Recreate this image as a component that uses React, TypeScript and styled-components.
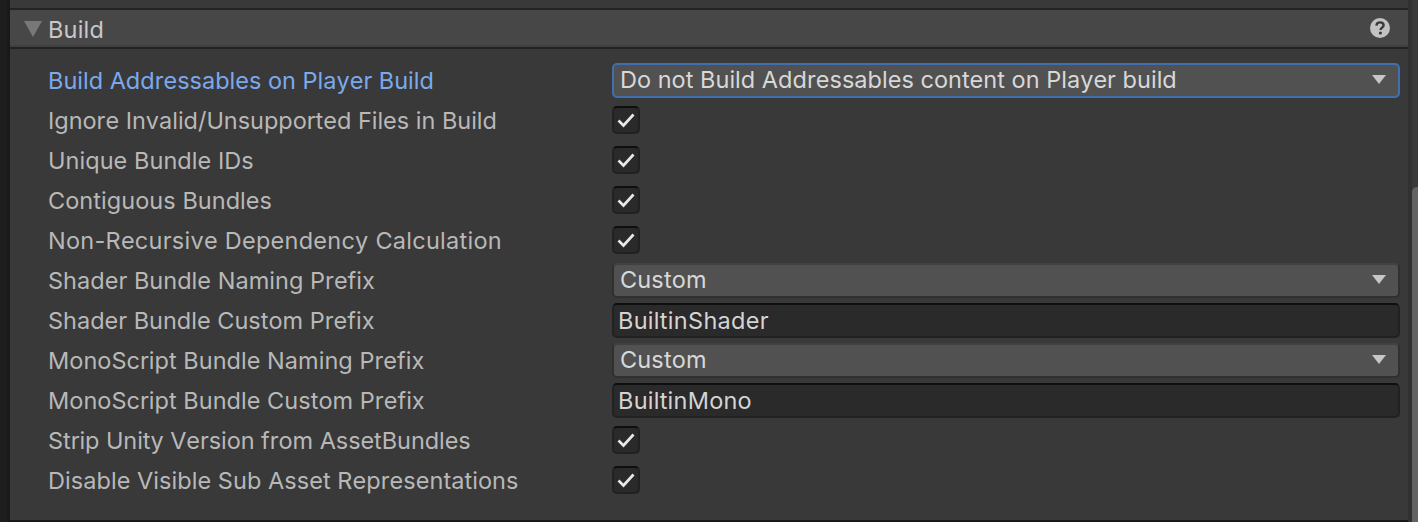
import React from "react";
import styled, { createGlobalStyle } from "styled-components";

const Global = createGlobalStyle`
  html, body { margin: 0; padding: 0; background: #383838; }
  body { font-family: Inter, "Liberation Sans", sans-serif; font-kerning: none; }
  #root { width: 1418px; height: 522px; overflow: hidden; }
`;

const Window = styled.div`
  display: flex;
  width: 1418px;
  height: 522px;
  background: #191919;
`;
const Gutter = styled.div`
  width: 10px;
  flex: none;
  background: linear-gradient(to right, #1e1e1e 70%, #191919 70%);
`;
const Panel = styled.div`
  width: 1398px;
  flex: none;
  display: flex;
  flex-direction: column;
  height: 520px;
  background: #393939;
  padding-top: 8px;
  box-sizing: border-box;
`;
const Track = styled.div`
  width: 10px;
  flex: none;
  height: 522px;
  background: #393939;
  padding-top: 187px;
  box-sizing: border-box;
  display: flex;
  border-left: 4px solid #313131;
`;
const Thumb = styled.div`
  flex: 1;
  background: #636363;
  border-radius: 5px 0 0 0;
`;
const Header = styled.div`
  height: 41px;
  box-sizing: border-box;
  display: flex;
  align-items: center;
  background: #474747;
  border-top: 2px solid #232323;
  border-bottom: 2px solid #232323;
  box-shadow: inset 0 -2px 0 #404040;
  padding: 0 18px 0 14px;
  color: #c8c8c8;
  font-size: 23.5px;
`;
const HeaderTitle = styled.span`
  flex: 1;
  margin-left: 6px;
  letter-spacing: 0.2px;
  position: relative;
  top: 1px;
`;
const HelpIcon = styled.svg`
  flex: none;
  margin-bottom: 1px;
`;
const Rows = styled.div`
  display: flex;
  flex-direction: column;
  padding-top: 11px;
`;
const Row = styled.div`
  display: flex;
  align-items: center;
  height: 40px;
  padding-left: 38px;
`;
const Label = styled.div<{ $active?: boolean; $track?: number }>`
  width: 564px;
  flex: none;
  font-size: 23.5px;
  letter-spacing: ${(p) => p.$track ?? 0}px;
  color: ${(p) => (p.$active ? "#7ba9ec" : "#b8b8b8")};
  white-space: nowrap;
`;
const Dropdown = styled.div<{ $focused?: boolean; $track?: number }>`
  width: 788px;
  height: 35px;
  box-sizing: border-box;
  display: flex;
  align-items: center;
  justify-content: space-between;
  padding: 0 12px 1px 6px;
  border-radius: 5px;
  background: #515151;
  color: #d8d8d8;
  font-size: 23.5px;
  letter-spacing: ${(p) => p.$track ?? 0}px;
  border: 2px solid ${(p) => (p.$focused ? "#3f6fb0" : "#303030")};
  border-top-color: ${(p) => (p.$focused ? "#3f6fb0" : "#414141")};
`;
const TextField = styled.div<{ $track?: number }>`
  width: 788px;
  height: 35px;
  box-sizing: border-box;
  display: flex;
  align-items: center;
  padding: 0 4px;
  border-radius: 5px;
  background: #2a2a2a;
  color: #d4d4d4;
  font-size: 23.5px;
  letter-spacing: ${(p) => p.$track ?? 0}px;
  border: 2px solid #212121;
  border-top-color: #0e0e0e;
`;
const CheckBox = styled.div`
  width: 28px;
  height: 28px;
  box-sizing: border-box;
  display: flex;
  align-items: center;
  justify-content: center;
  border-radius: 5px;
  background: #2a2a2a;
  border: 2px solid #212121;
  border-top-color: #0e0e0e;
`;

const Caret = ({ color, w, h }: { color: string; w: number; h: number }) => (
  <svg width={w} height={h} viewBox="0 0 14 10" preserveAspectRatio="none" style={{ flex: "none" }}>
    <path d="M0 0H14L7 10Z" fill={color} />
  </svg>
);
const Check = () => (
  <svg width="20" height="16" viewBox="0 0 20 16">
    <path d="M2.5 8.5L7.5 13.5L17.5 2.5" fill="none" stroke="#e8e8e8" strokeWidth="2.7" />
  </svg>
);
const Help = () => (
  <HelpIcon width="20" height="20" viewBox="0 0 20 20">
    <circle cx="10" cy="10" r="10" fill="#c2c2c2" />
    <path d="M6.4 7.6C6.6 5.4 8 4.4 10 4.4C12.1 4.4 13.6 5.5 13.6 7.3C13.6 9.6 10.6 9.6 10.6 12" fill="none" stroke="#3a3a3a" strokeWidth="2.4" />
    <circle cx="10.4" cy="15" r="1.6" fill="#3a3a3a" />
  </HelpIcon>
);

type Base = { label: string; track?: number };
type Item =
  | (Base & { kind: "select"; value: string; valueTrack?: number; active?: boolean })
  | (Base & { kind: "text"; value: string; valueTrack?: number })
  | (Base & { kind: "check" });

const items: Item[] = [
  { label: "Build Addressables on Player Build", kind: "select", value: "Do not Build Addressables content on Player build", valueTrack: 0.02, active: true },
  { label: "Ignore Invalid/Unsupported Files in Build", kind: "check", track: -0.02 },
  { label: "Unique Bundle IDs", kind: "check", track: 0.05 },
  { label: "Contiguous Bundles", kind: "check", track: 0.05 },
  { label: "Non-Recursive Dependency Calculation", kind: "check", track: 0.26 },
  { label: "Shader Bundle Naming Prefix", kind: "select", value: "Custom", valueTrack: 0.15, track: 0.03 },
  { label: "Shader Bundle Custom Prefix", kind: "text", value: "BuiltinShader", valueTrack: 0.3 },
  { label: "MonoScript Bundle Naming Prefix", kind: "select", value: "Custom", valueTrack: 0.15, track: 0.03 },
  { label: "MonoScript Bundle Custom Prefix", kind: "text", value: "BuiltinMono", valueTrack: 0.25, track: 0.03 },
  { label: "Strip Unity Version from AssetBundles", kind: "check", track: -0.06 },
  { label: "Disable Visible Sub Asset Representations", kind: "check", track: 0.05 },
];

export default function App() {
  return (
    <Window>
      <Global />
      <Gutter />
      <Panel>
        <Header>
          <Caret color="#787878" w={18} h={16} />
          <HeaderTitle>Build</HeaderTitle>
          <Help />
        </Header>
        <Rows>
          {items.map((it) => (
            <Row key={it.label}>
              <Label $active={it.kind === "select" && it.active} $track={it.track}>{it.label}</Label>
              {it.kind === "select" && (
                <Dropdown $focused={it.active} $track={it.valueTrack}>
                  <span>{it.value}</span>
                  <Caret color="#c6c6c6" w={14} h={9} />
                </Dropdown>
              )}
              {it.kind === "text" && <TextField $track={it.valueTrack}>{it.value}</TextField>}
              {it.kind === "check" && (
                <CheckBox>
                  <Check />
                </CheckBox>
              )}
            </Row>
          ))}
        </Rows>
      </Panel>
      <Track>
        <Thumb />
      </Track>
    </Window>
  );
}
